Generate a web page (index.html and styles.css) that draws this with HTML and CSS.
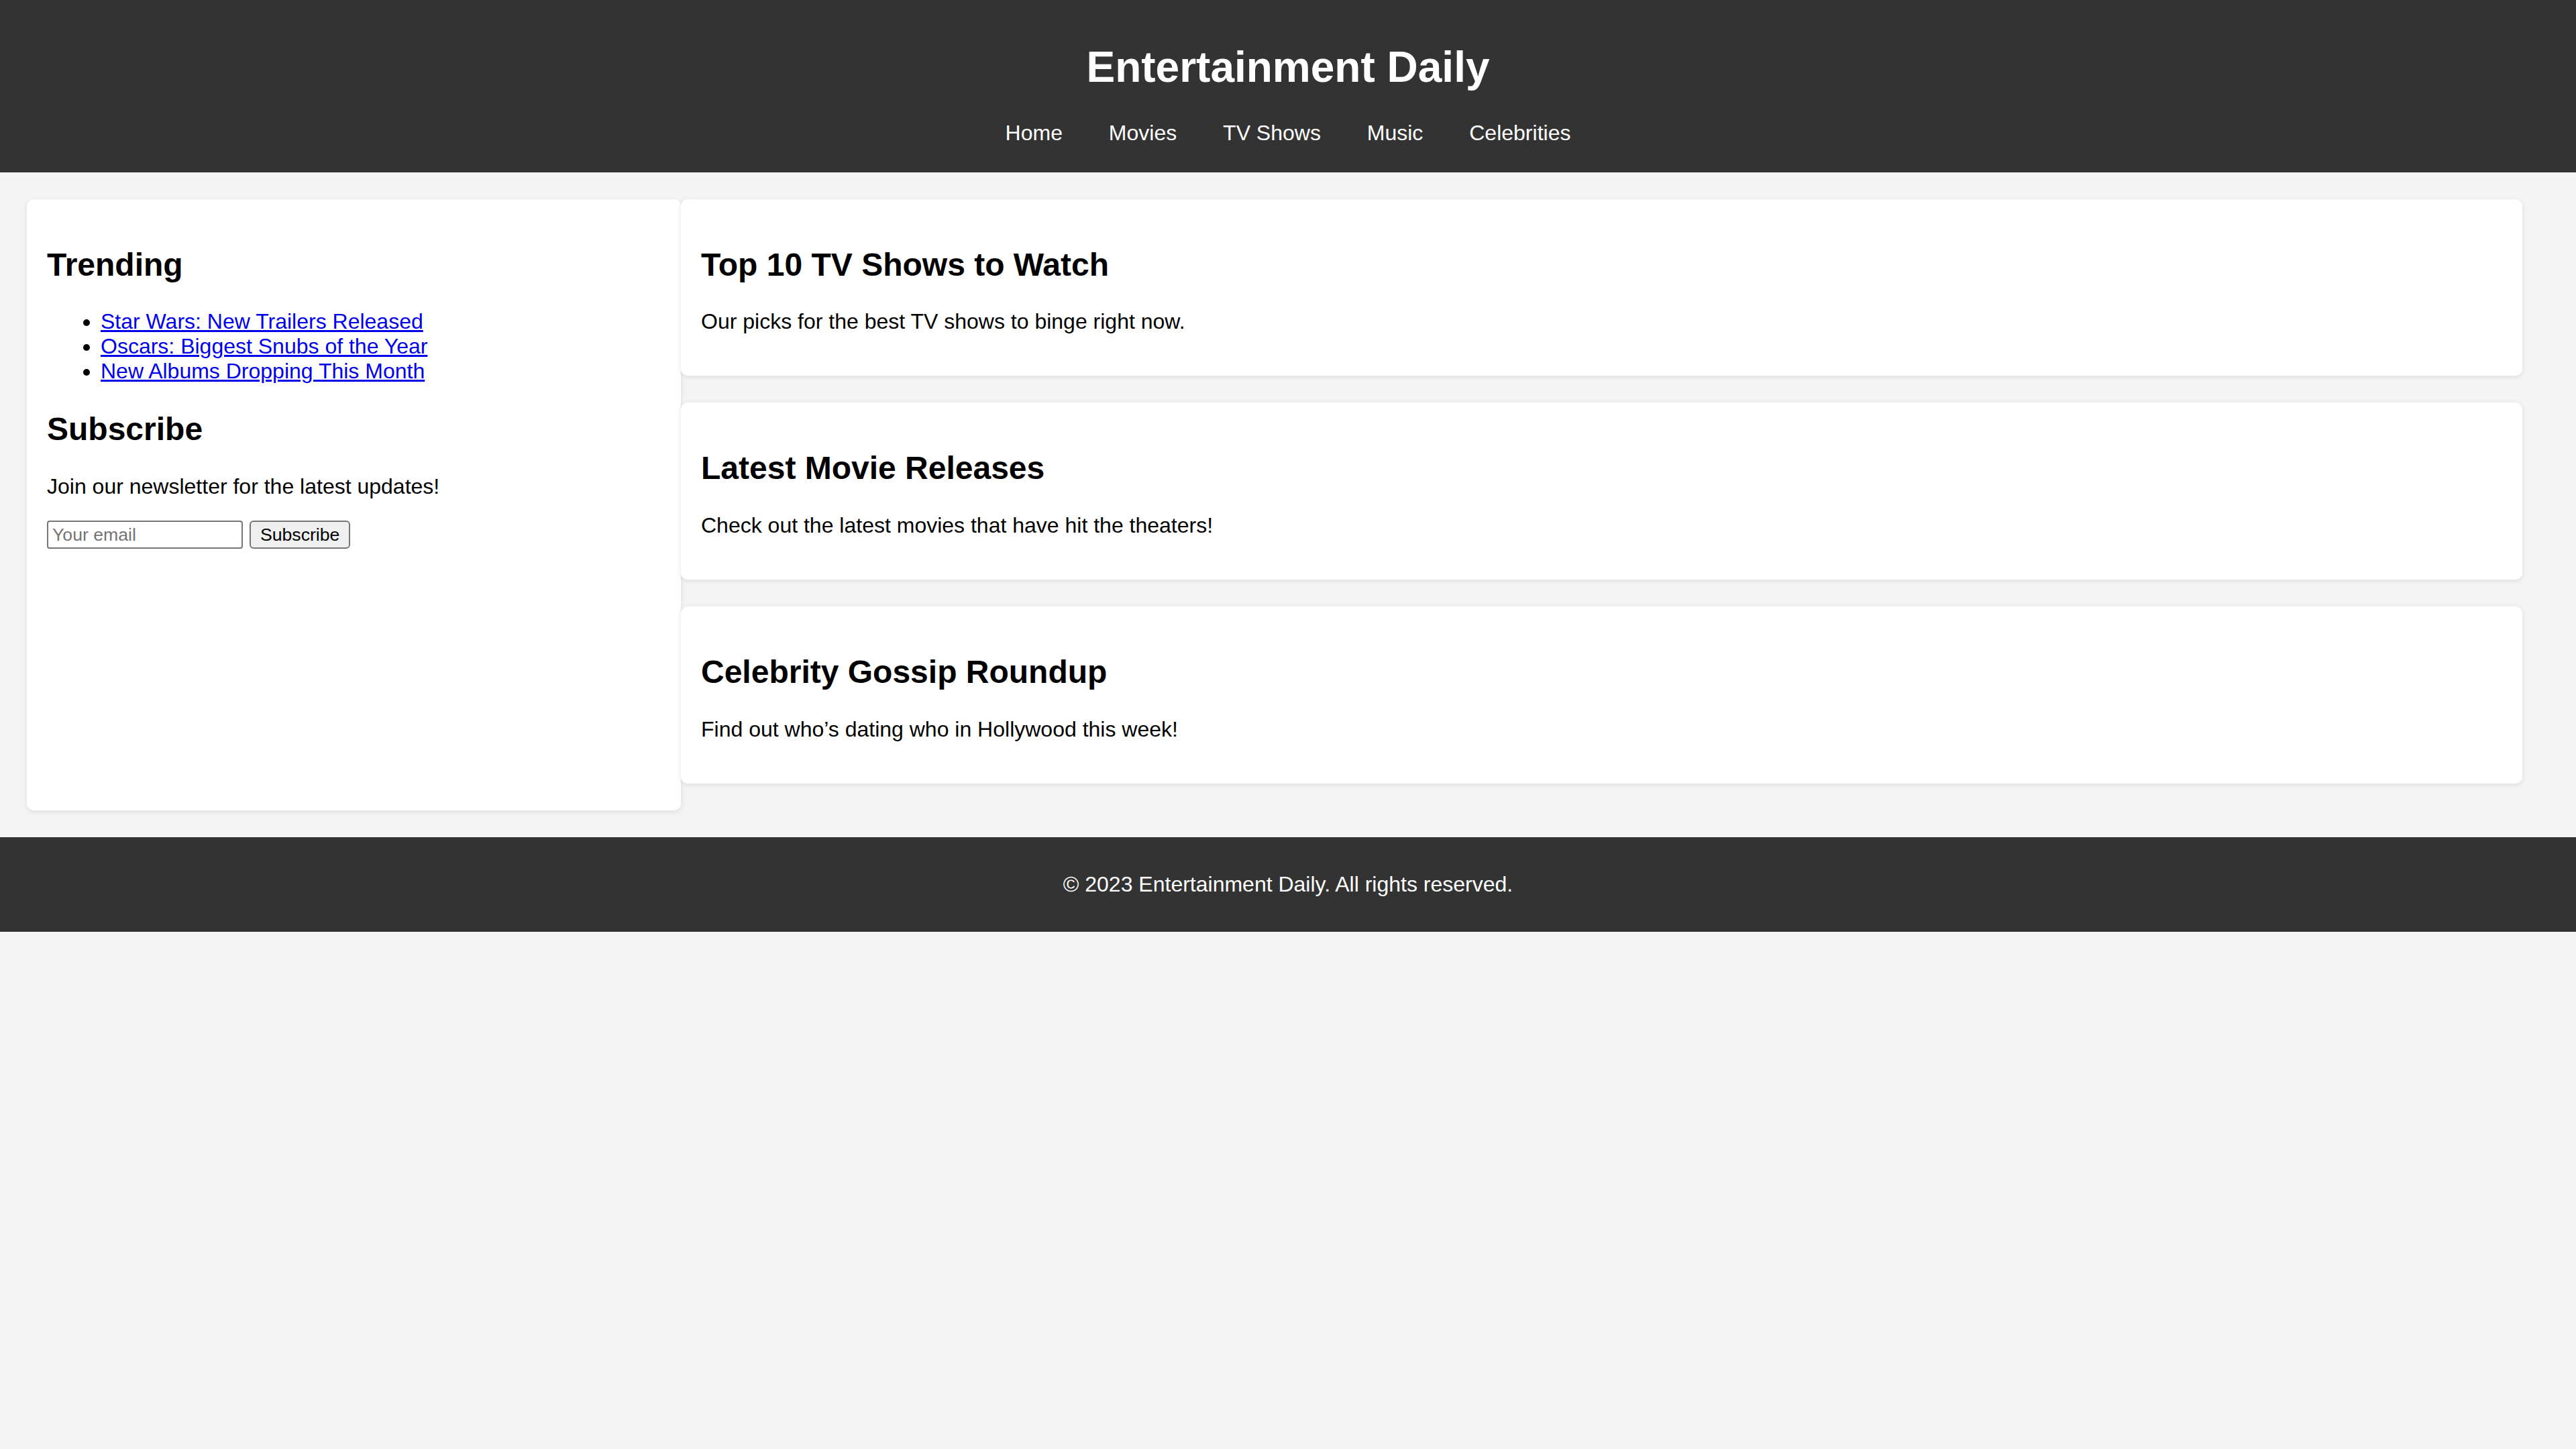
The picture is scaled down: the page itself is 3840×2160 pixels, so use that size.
FILE: index.html
```html
<!DOCTYPE html>
<html lang="en">
<head>
<meta charset="utf-8">
<title>Entertainment Daily</title>
<link rel="stylesheet" href="styles.css">
</head>
<body>
<header class="site-header">
  <h1 class="site-title">Entertainment Daily</h1>
  <nav class="site-nav">
    <ul class="nav-list">
      <li class="nav-item"><a class="nav-link" href="#">Home</a></li>
      <li class="nav-item"><a class="nav-link" href="#">Movies</a></li>
      <li class="nav-item"><a class="nav-link" href="#">TV Shows</a></li>
      <li class="nav-item"><a class="nav-link" href="#">Music</a></li>
      <li class="nav-item"><a class="nav-link" href="#">Celebrities</a></li>
    </ul>
  </nav>
</header>
<main class="layout">
  <aside class="sidebar">
    <h2 class="heading">Trending</h2>
    <ul class="trend-list">
      <li><a class="trend-link" href="#">Star Wars: New Trailers Released</a></li>
      <li><a class="trend-link" href="#">Oscars: Biggest Snubs of the Year</a></li>
      <li><a class="trend-link" href="#">New Albums Dropping This Month</a></li>
    </ul>
    <h2 class="heading">Subscribe</h2>
    <p class="text">Join our newsletter for the latest updates!</p>
    <form class="subscribe-form">
      <input class="email-input" type="email" placeholder="Your email"> <button class="subscribe-btn" type="button">Subscribe</button>
    </form>
  </aside>
  <section class="content">
    <article class="card">
      <h2 class="heading">Top 10 TV Shows to Watch</h2>
      <p class="text">Our picks for the best TV shows to binge right now.</p>
    </article>
    <article class="card">
      <h2 class="heading">Latest Movie Releases</h2>
      <p class="text">Check out the latest movies that have hit the theaters!</p>
    </article>
    <article class="card">
      <h2 class="heading">Celebrity Gossip Roundup</h2>
      <p class="text">Find out who’s dating who in Hollywood this week!</p>
    </article>
  </section>
</main>
<footer class="site-footer">
  <p class="footer-text">© 2023 Entertainment Daily. All rights reserved.</p>
</footer>
</body>
</html>
```
FILE: styles.css
```css
html {
  background: #f4f4f4;
}

body {
  margin: 0;
  font-family: "Liberation Sans", Arial, Helvetica, sans-serif;
  font-size: 32px;
  color: #000;
  background: #f4f4f4;
}

.site-header {
  background: #333;
  color: #fff;
  text-align: center;
  padding: 20px 0;
}

.site-title {
  font-size: 64px;
  font-weight: bold;
  margin: 42.88px 0;
}

.nav-list {
  list-style: none;
  margin: 0 0 20px;
  padding: 0;
}

.nav-item {
  display: inline;
  margin: 0 30px;
}

.nav-link {
  color: #fff;
  text-decoration: none;
}

.layout {
  display: flex;
  align-items: stretch;
  padding: 40px;
}

.sidebar {
  flex: 1;
  background: #fff;
  padding: 30px;
  border-radius: 10px;
  box-shadow: 0 2px 8px rgba(0, 0, 0, 0.1);
}

.content {
  flex: 3;
  margin-right: 40px;
}

.card {
  background: #fff;
  padding: 30px;
  margin-bottom: 40px;
  border-radius: 10px;
  box-shadow: 0 2px 8px rgba(0, 0, 0, 0.1);
}

.heading {
  font-size: 48px;
  font-weight: bold;
  margin: 39.84px 0;
}

.text {
  margin: 32px 0;
}

.trend-list {
  margin: 32px 0;
  padding-left: 80px;
}

.trend-link {
  color: #0000ee;
  text-decoration: underline;
}

.subscribe-form {
  margin: 0;
}

.email-input {
  box-sizing: border-box;
  width: 292px;
  height: 42px;
  padding: 0 6px;
  border: 2px solid #767676;
  border-radius: 4px;
  font-family: "Liberation Sans", Arial, sans-serif;
  font-size: 26.67px;
  color: #000;
  background: #fff;
  vertical-align: baseline;
}

.email-input::placeholder {
  color: #757575;
}

.subscribe-btn {
  box-sizing: border-box;
  height: 42px;
  margin-left: 1px;
  padding: 0 14px;
  border: 2px solid #767676;
  border-radius: 6px;
  background: #efefef;
  color: #000;
  font-family: "Liberation Sans", Arial, sans-serif;
  font-size: 26.67px;
  vertical-align: baseline;
}

.site-footer {
  background: #333;
  color: #fff;
  text-align: center;
  padding: 20px 0;
}

.footer-text {
  margin: 32px 0;
}
```
